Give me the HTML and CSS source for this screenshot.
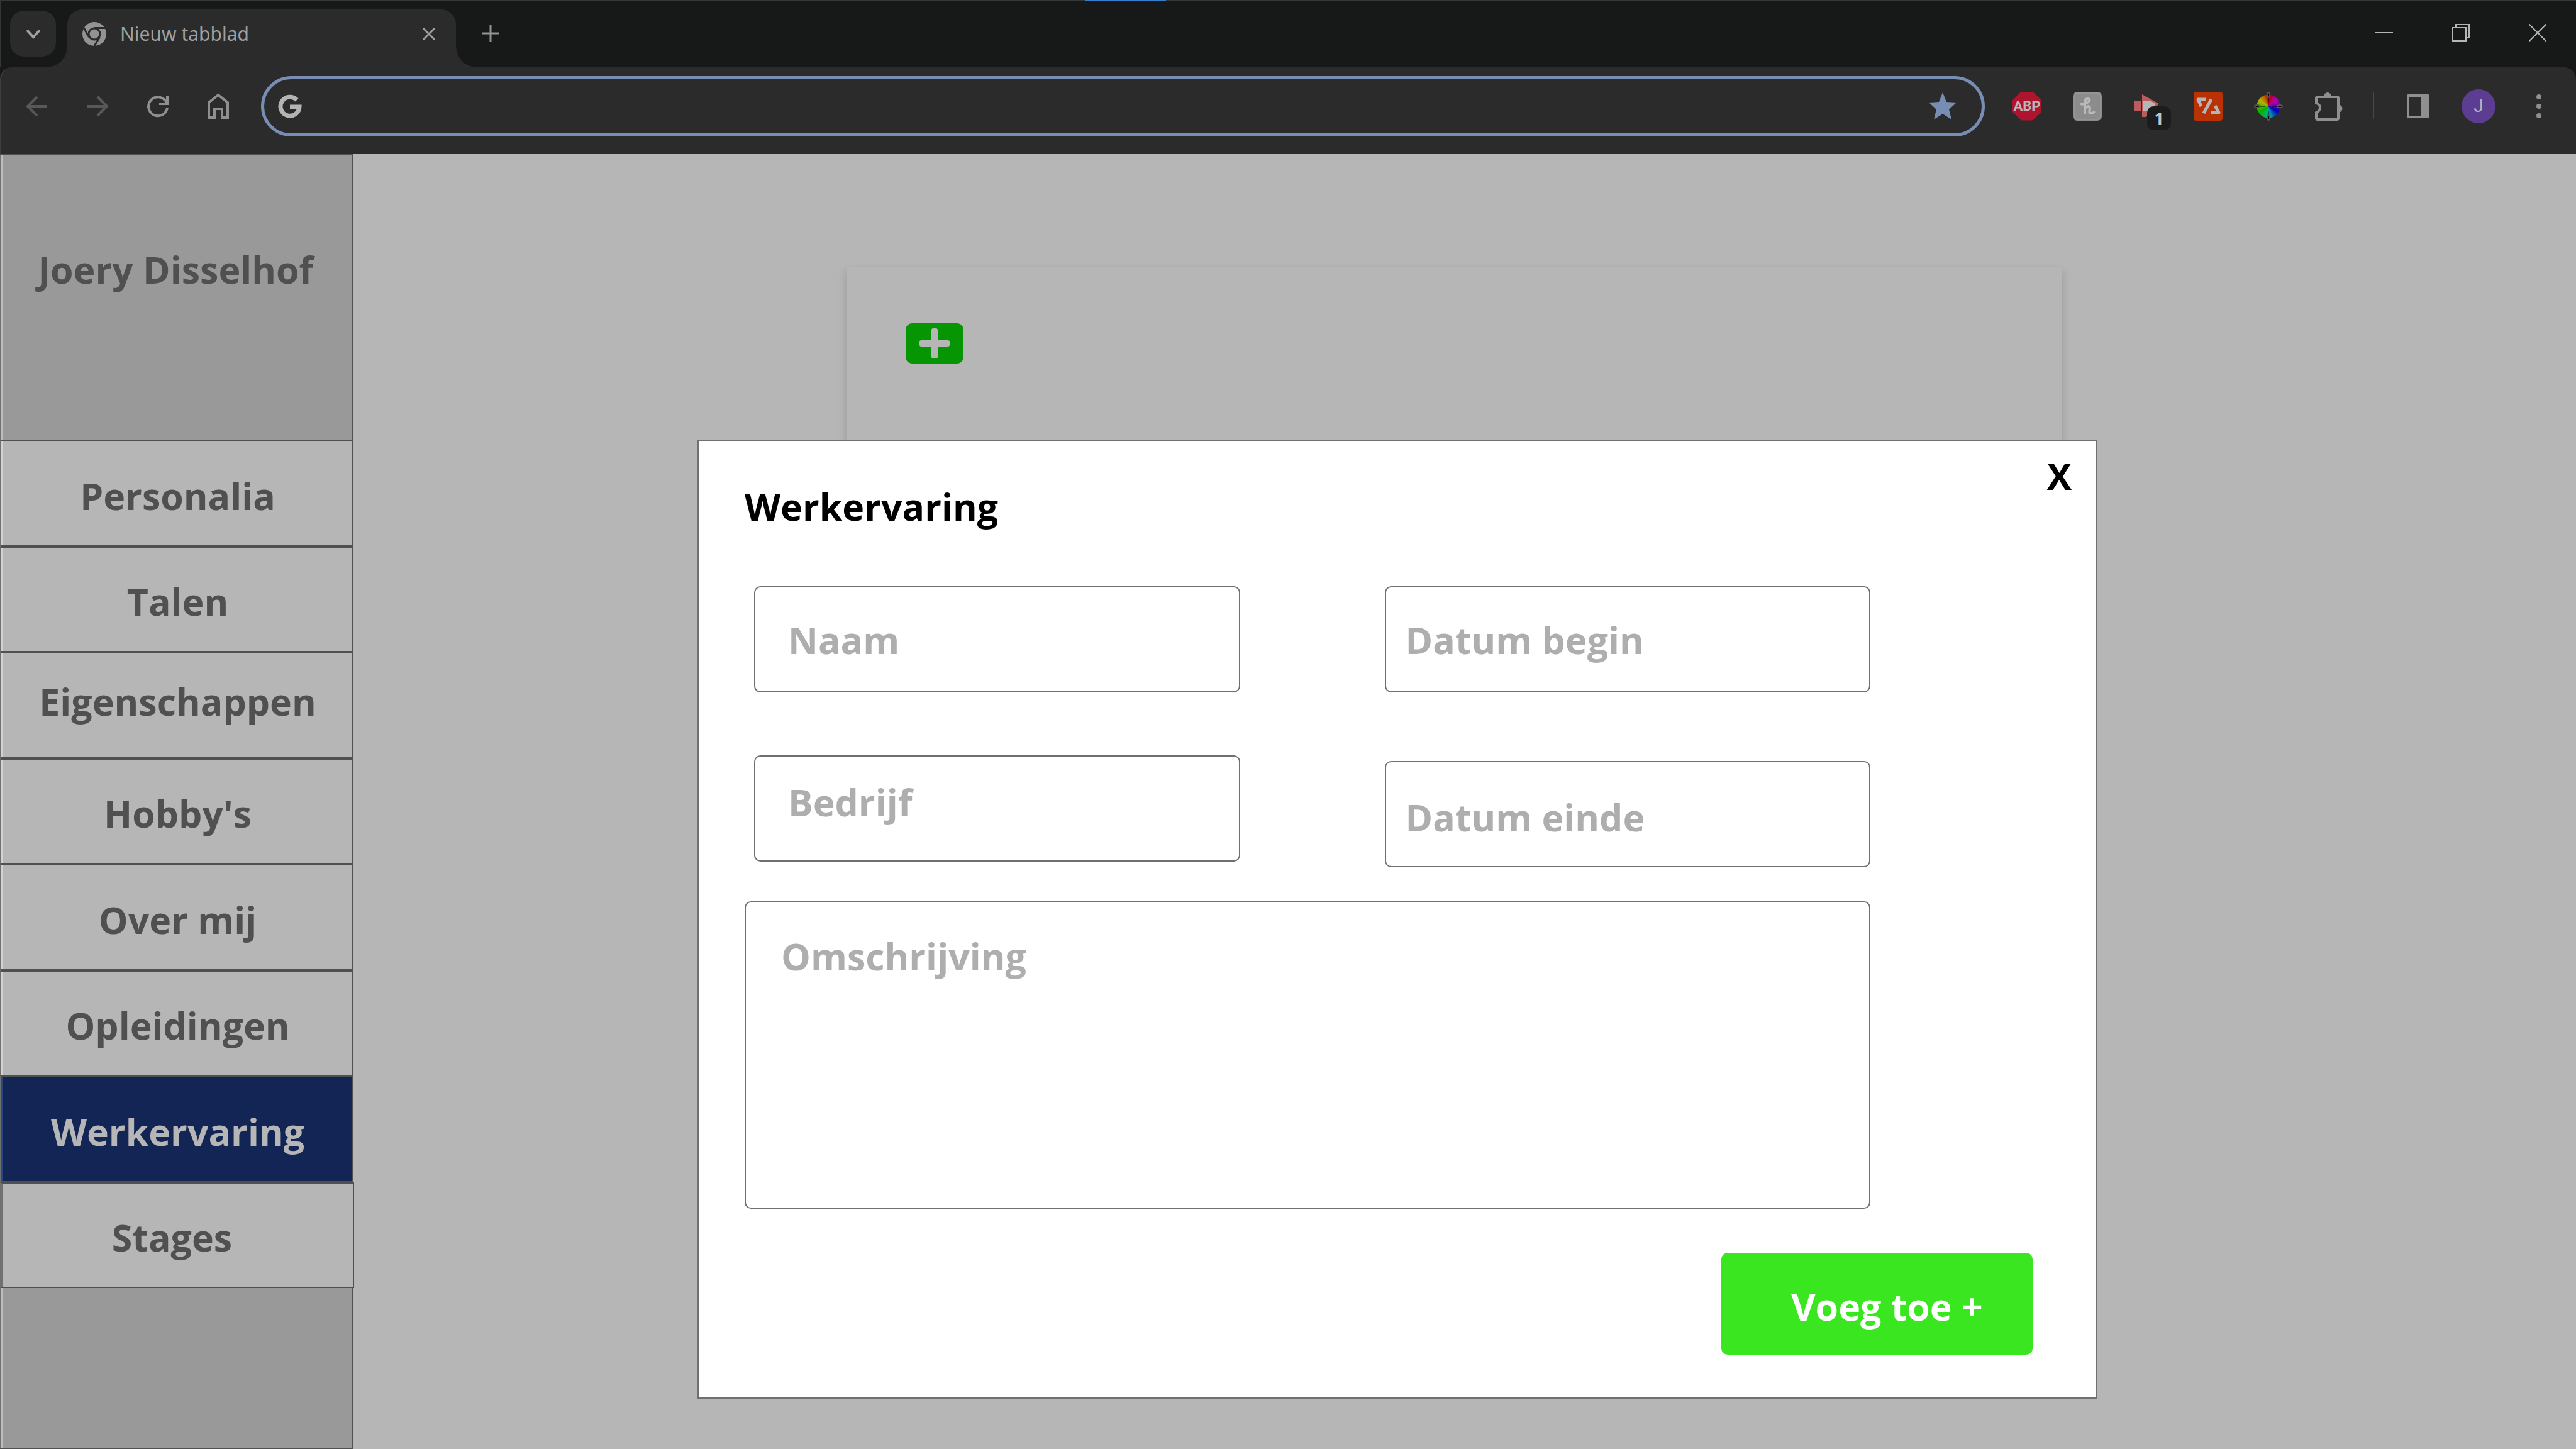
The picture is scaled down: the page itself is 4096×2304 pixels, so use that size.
FILE: index.html
```html
<!DOCTYPE html>
<html lang="nl">
<head>
<meta charset="utf-8">
<title>Werkervaring</title>
<link rel="stylesheet" href="styles.css">
</head>
<body>
<header class="browser">
  <div class="window-edge"><span class="window-edge-mark"></span></div>
  <div class="tab-strip">
    <button class="tab-search" type="button" aria-label="Tabbladen zoeken">
      <svg width="26" height="20" viewBox="0 0 26 20"><path d="M3 4l10 11L23 4" fill="none" stroke="#a0a0a0" stroke-width="4"/></svg>
    </button>
    <div class="tab">
      <svg width="38" height="38" viewBox="0 0 38 38">
        <circle cx="19" cy="19" r="19" fill="#939393"/>
        <circle cx="19" cy="19" r="9" fill="#939393" stroke="#2b2b2b" stroke-width="3"/>
        <path d="M19 9.500H36M27.500 24L19 38M10.500 24L2 9" stroke="#2b2b2b" stroke-width="3" fill="none"/>
      </svg>
      <span class="tab-title">Nieuw tabblad</span>
      <button class="icon-button" type="button" aria-label="Tabblad sluiten">
        <svg width="22" height="22" viewBox="0 0 22 22"><path d="M2 2l18 18M20 2L2 20" stroke="#a0a0a0" stroke-width="3"/></svg>
      </button>
    </div>
    <button class="icon-button tab-new" type="button" aria-label="Nieuw tabblad openen">
      <svg width="28" height="28" viewBox="0 0 28 28"><path d="M14 0v28M0 14h28" stroke="#939393" stroke-width="3"/></svg>
    </button>
    <div class="window-controls">
      <button class="icon-button" type="button" aria-label="Minimaliseren">
        <svg width="28" height="28" viewBox="0 0 28 28"><path d="M0 14h28" stroke="#b6b6b6" stroke-width="2"/></svg>
      </button>
      <button class="icon-button" type="button" aria-label="Verkleinen">
        <svg width="28" height="28" viewBox="0 0 28 28"><path d="M1 6h21v21H1zM6 6V1h21v21h-5" fill="none" stroke="#b6b6b6" stroke-width="2"/></svg>
      </button>
      <button class="icon-button" type="button" aria-label="Sluiten">
        <svg width="28" height="28" viewBox="0 0 28 28"><path d="M0 0l28 28M28 0L0 28" stroke="#b6b6b6" stroke-width="2"/></svg>
      </button>
    </div>
  </div>
  <div class="toolbar">
    <button class="cell" type="button" aria-label="Terug">
      <svg width="34" height="34" viewBox="0 0 34 34"><path d="M33 17H3M17 2L2 17l15 15" fill="none" stroke="#585858" stroke-width="4"/></svg>
    </button>
    <button class="cell" type="button" aria-label="Vooruit">
      <svg width="34" height="34" viewBox="0 0 34 34"><path d="M1 17h30M17 2l15 15-15 15" fill="none" stroke="#585858" stroke-width="4"/></svg>
    </button>
    <button class="cell" type="button" aria-label="Vernieuwen">
      <svg width="36" height="36" viewBox="0 0 36 36"><path d="M33 20A15 15 0 1 1 28 7l5 5" fill="none" stroke="#8f8f8f" stroke-width="4"/><path d="M33 1v13H20" fill="none" stroke="#8f8f8f" stroke-width="4"/></svg>
    </button>
    <button class="cell" type="button" aria-label="Startpagina">
      <svg width="36" height="42" viewBox="0 0 36 42"><path d="M3 15L18 3l15 12v24h-9V25H12v14H3z" fill="none" stroke="#8f8f8f" stroke-width="4"/></svg>
    </button>
    <div class="address">
      <svg width="38" height="38" viewBox="0 0 38 38"><path d="M30 9A15 15 0 1 0 34 20H19" fill="none" stroke="#b4b4b4" stroke-width="7"/></svg>
      <input class="address-input" type="text" aria-label="Adresbalk">
      <button class="icon-button" type="button" aria-label="Bladwijzer">
        <svg width="44" height="44" viewBox="0 0 44 44"><path d="M22 0l6 15 16 1-12 11 4 16-14-9-14 9 4-16L0 16l16-1z" fill="#788db3"/></svg>
      </button>
    </div>
    <button class="cell" type="button"><span class="abp">ABP</span></button>
    <button class="cell" type="button" aria-label="Honey">
      <svg width="46" height="46" viewBox="0 0 46 46"><rect width="46" height="46" rx="7" fill="#8c8c8c"/><rect x="2" y="2" width="42" height="42" rx="5" fill="none" stroke="#969696" stroke-width="2"/><path d="M12 18q2 3 6 1c8-2 11-8 6-8-5 0-5 3-5 7v17M19 27c2-4 8-6 8-1 0 3-2 8 1 8 3 0 5 0 6-3" fill="none" stroke="#b9b9b9" stroke-width="4"/></svg>
    </button>
    <button class="cell cell-badge" type="button" aria-label="Extensie">
      <svg width="46" height="46" viewBox="0 0 46 46"><path d="M1 14h12v16H1z" fill="#bb5b5b"/><path d="M14 4l27 15-21 21h-6z" fill="#bb5b5b"/><path d="M15 14h12l8 5v11H15z" fill="#b6b6b6"/></svg>
      <span class="badge">1</span>
    </button>
    <button class="cell" type="button" aria-label="Code">
      <svg width="46" height="46" viewBox="0 0 46 46"><rect width="46" height="46" rx="4" fill="#b93203"/><path d="M19 12H7l5 11M28 12L16 34M34 22l6 11H27" fill="none" stroke="#b9b4b2" stroke-width="5" stroke-linejoin="round"/></svg>
    </button>
    <button class="cell" type="button" aria-label="Kleurkiezer">
      <span class="wheel">
        <svg width="46" height="46" viewBox="0 0 46 46"><path d="M23 8v8M23 30v8M8 23h10M28 23h10" stroke="#000" stroke-opacity=".5" stroke-width="2"/><g fill="#000" stroke="#555" stroke-width="2"><ellipse cx="23" cy="5" rx="2" ry="4"/><ellipse cx="23" cy="41" rx="2" ry="4"/><ellipse cx="5" cy="23" rx="4" ry="2"/><ellipse cx="41" cy="23" rx="4" ry="2"/></g></svg>
      </span>
    </button>
    <button class="cell" type="button" aria-label="Extensies">
      <svg width="46" height="48" viewBox="0 0 46 48"><path d="M5 9h31q2 0 2 2v32q0 2-2 2H5q-2 0-2-2V34c8-4 8-12 0-15v-8q0-2 2-2z" fill="none" stroke="#8f8f8f" stroke-width="4"/><path d="M15 9a6 7 0 0 1 12 0zM38 21a6 6 0 0 1 0 13z" fill="#8f8f8f"/></svg>
    </button>
    <span class="separator"></span>
    <button class="cell" type="button" aria-label="Zijvenster">
      <svg width="40" height="40" viewBox="0 0 40 40"><path d="M4 3h32v34H4z" fill="none" stroke="#8f8f8f" stroke-width="4" stroke-linejoin="round"/><path d="M24 3h14v34H24z" fill="#8f8f8f"/></svg>
    </button>
    <button class="cell" type="button"><span class="avatar">J</span></button>
    <button class="cell" type="button" aria-label="Menu">
      <svg width="10" height="40" viewBox="0 0 10 40"><g fill="#8f8f8f"><circle cx="5" cy="5" r="4"/><circle cx="5" cy="20" r="4"/><circle cx="5" cy="35" r="4"/></g></svg>
    </button>
  </div>
</header>
<div class="page">
  <aside class="sidebar">
    <div class="profile">Joery Disselhof</div>
    <nav class="menu">
      <a class="menu-item" href="#personalia">Personalia</a>
      <a class="menu-item" href="#talen">Talen</a>
      <a class="menu-item menu-item-raised" href="#eigenschappen">Eigenschappen</a>
      <a class="menu-item" href="#hobbys">Hobby's</a>
      <a class="menu-item" href="#over-mij">Over mij</a>
      <a class="menu-item" href="#opleidingen">Opleidingen</a>
      <a class="menu-item menu-item-active" href="#werkervaring" aria-current="page">Werkervaring</a>
      <a class="menu-item menu-item-last" href="#stages">Stages</a>
    </nav>
  </aside>
  <main class="content">
    <section class="card">
      <button class="add" type="button" aria-label="Toevoegen">
        <svg width="48" height="48" viewBox="0 0 48 48"><path d="M19 3q0-3 3-3h4q3 0 3 3v16h16q3 0 3 3v4q0 3-3 3H29v16q0 3-3 3h-4q-3 0-3-3V29H3q-3 0-3-3v-4q0-3 3-3h16z" fill="#b6b6b6"/></svg>
      </button>
    </section>
  </main>
</div>
<div class="overlay">
  <form class="dialog" role="dialog" aria-labelledby="dialog-title">
    <div class="dialog-head">
      <h1 class="dialog-title" id="dialog-title">Werkervaring</h1>
      <button class="dialog-close" type="button">X</button>
    </div>
    <div class="fields">
      <div class="column">
        <input class="field" type="text" aria-label="Naam" placeholder="Naam">
        <input class="field field-raised" type="text" aria-label="Bedrijf" placeholder="Bedrijf">
      </div>
      <div class="column column-dates">
        <input class="field" type="text" aria-label="Datum begin" placeholder="Datum begin">
        <input class="field field-lowered" type="text" aria-label="Datum einde" placeholder="Datum einde">
      </div>
    </div>
    <textarea class="field description" aria-label="Omschrijving" placeholder="Omschrijving"></textarea>
    <button class="submit" type="submit">Voeg toe +</button>
  </form>
</div>
</body>
</html>
```
FILE: styles.css
```css
* { box-sizing: border-box; }

body {
  margin: 0;
  min-height: 100vh;
  display: flex;
  flex-direction: column;
  position: relative;
  background: #b6b6b6;
  color: #505050;
  font: 700 59px/88px "Open Sans", "Noto Sans", sans-serif;
}

button {
  margin: 0;
  padding: 0;
  border: 0;
  background: none;
  color: inherit;
  font: inherit;
}

svg { display: block; flex: none; }

/* Browser frame */
.browser { background: #171918; }

.window-edge { height: 2px; background: #353636; }

.window-edge-mark {
  display: block;
  width: 128px;
  height: 2px;
  margin-left: 42.14%;
  background: #3480cf;
}

.tab-strip {
  height: 105px;
  padding-left: 14px;
  display: flex;
  align-items: flex-start;
  border-left: 2px solid #353636;
}

.tab-search {
  width: 73px;
  height: 73px;
  margin-top: 15px;
  border-radius: 22px;
  background: #2b2b2b;
  display: grid;
  place-items: center;
}

.tab {
  position: relative;
  width: 618px;
  height: 92px;
  margin: 13px 0 0 18px;
  padding: 0 32px 14px 24px;
  display: flex;
  align-items: center;
  border-radius: 24px 24px 0 0;
  background: #2b2b2b;
}

.tab::before,
.tab::after {
  content: "";
  position: absolute;
  bottom: 0;
  width: 32px;
  height: 32px;
}

.tab::before {
  right: 100%;
  background: radial-gradient(circle at 0 0, transparent 31px, #2b2b2b 32px);
}

.tab::after {
  left: 100%;
  background: radial-gradient(circle at 100% 0, transparent 31px, #2b2b2b 32px);
}

.tab-title {
  flex: 1;
  margin-left: 22px;
  color: #a0a0a0;
  font: 400 30px/44px "Noto Sans", sans-serif;
}

.icon-button { display: grid; place-items: center; }

.tab-new { margin: 37px 0 0 41px; }

.window-controls {
  margin: 36px 47px 0 auto;
  display: flex;
  gap: 94px;
}

.toolbar {
  height: 138px;
  padding: 0 11px 15px 9px;
  display: flex;
  align-items: center;
  border-left: 2px solid #3e3e3e;
  border-radius: 19px 19px 0 0;
  background: #2b2b2b;
}

.cell {
  flex: none;
  width: 96px;
  height: 96px;
  display: grid;
  place-items: center;
}

.address {
  flex: 1;
  height: 96px;
  margin: 0 19px 0 20px;
  padding: 0 40px 0 22px;
  display: flex;
  align-items: center;
  gap: 20px;
  border: 5px solid #788db3;
  border-radius: 48px;
}

.address-input {
  flex: 1;
  min-width: 0;
  border: 0;
  outline: 0;
  background: none;
  color: #b6b6b6;
  font: 400 30px/44px "Noto Sans", sans-serif;
}

.abp {
  width: 46px;
  height: 46px;
  display: grid;
  place-items: center;
  background: #ae142d;
  clip-path: polygon(30% 0, 70% 0, 100% 30%, 100% 70%, 70% 100%, 30% 100%, 0 70%, 0 30%);
  color: #bcb4b6;
  font: 700 22px/22px Roboto, sans-serif;
}

.cell-badge { position: relative; }

.badge {
  position: absolute;
  left: 47px;
  top: 48px;
  width: 38px;
  height: 38px;
  border-radius: 10px;
  background: #1c1c1c;
  color: #c4c4c4;
  text-align: center;
  font: 700 26px/38px "Noto Sans", sans-serif;
}

.wheel {
  width: 46px;
  height: 46px;
  background: radial-gradient(circle, transparent 18px, #2b2b2b 19px),
    conic-gradient(#b40000, #b400a0 45deg, #7000b4 85deg, #0000b4 120deg, #0090b4 165deg, #00b478 190deg, #00b400 235deg, #64b400 275deg, #b4b400 305deg, #b46400 335deg, #b40000);
}

.separator {
  width: 2px;
  height: 43px;
  margin: 0 22px;
  background: #484848;
}

.avatar {
  width: 54px;
  height: 54px;
  border-radius: 50%;
  background: #5c3d91;
  color: #b6b0c0;
  text-align: center;
  font: 400 28px/54px Roboto, sans-serif;
}

/* Page behind the dialog */
.page {
  flex: 1;
  display: flex;
}

.sidebar {
  width: 561px;
  display: flex;
  flex-direction: column;
  border: solid #505050;
  border-width: 2px 2px 2px 0;
  background: #999;
  box-shadow: inset 2px 0 #707070, inset 4px 0 #bdbdbd;
  text-align: center;
}

.profile {
  height: 453px;
  padding-top: 137px;
}

.menu {
  height: 1348px;
  margin-right: -2px;
  display: grid;
  grid-auto-rows: 1fr;
}

.menu-item {
  display: grid;
  place-items: center;
  padding: 7px 0 0 4px;
  border: 2px solid #505050;
  border-left-color: #707070;
  background: #b6b6b6;
  box-shadow: inset 2px 0 #d2d2d2;
  color: inherit;
  text-decoration: none;
}

.menu-item-raised { padding-bottom: 20px; }

.menu-item-active {
  background: #132555;
  box-shadow: inset 2px 0 #2a4683;
  color: #b6b6b6;
}

.menu-item-last {
  margin-right: -2px;
  padding-right: 22px;
  border-left-width: 4px;
  box-shadow: none;
}

.content {
  flex: 1;
  padding: 180px 817px 0 785px;
}

.card {
  height: 800px;
  padding: 89px 94px;
  background: #b6b6b6;
  box-shadow: 0 6px 13px rgba(0, 0, 0, 0.16);
}

.add {
  width: 92px;
  height: 64px;
  border-radius: 10px;
  background: #079603;
  display: grid;
  place-items: center;
}

/* Dialog */
.overlay {
  position: absolute;
  inset: 0;
  padding: 700px 762px 0 1109px;
}

.dialog {
  padding: 10px 100px 68px 73px;
  display: flex;
  flex-direction: column;
  border: 2px solid #707070;
  background: #fff;
  color: #000;
}

.dialog-head {
  display: flex;
  justify-content: space-between;
  align-items: flex-start;
  margin-right: -62px;
}

.dialog-title {
  margin: 49px 0 83px;
  font: inherit;
}

.fields {
  margin-right: 258px;
  padding-left: 15px;
  display: grid;
  grid-template-columns: 1fr 1fr;
  align-items: start;
  gap: 230px;
}

.column {
  display: flex;
  flex-direction: column;
  gap: 100px;
}

.column-dates { gap: 109px; }

.field {
  width: 100%;
  min-width: 0;
  height: 169px;
  margin: 0;
  padding: 0 52px;
  border: 2px solid #707070;
  border-radius: 10px;
  outline: 0;
  background: #fff;
  color: #505050;
  font: inherit;
}

.field::placeholder { color: #aeaeae; opacity: 1; }

.column-dates .field { padding: 0 31px; }

.field-raised { padding-bottom: 22px; }

.column-dates .field-lowered { padding-top: 8px; }

.description {
  width: auto;
  height: 489px;
  margin: 54px 258px 70px 0;
  padding: 41px 56px;
  resize: none;
}

.submit {
  align-self: flex-end;
  width: 495px;
  height: 162px;
  padding: 8px 0 0 32px;
  border-radius: 10px;
  background: #39e61f;
  color: #fff;
}
```
